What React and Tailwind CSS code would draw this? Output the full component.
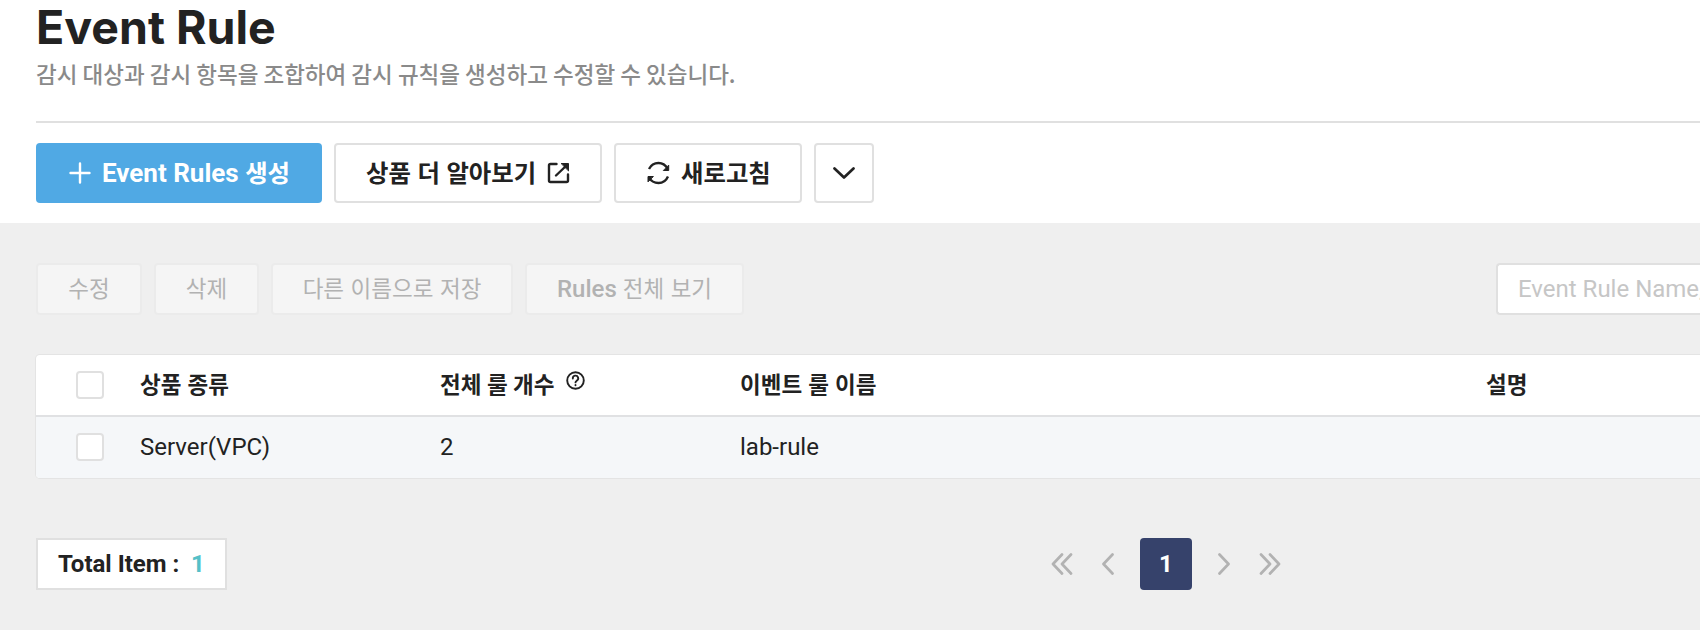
const KR = "font-['Noto_Sans_CJK_KR',sans-serif]";

function Ko({ children, className = '', size = 'text-[22.5px]', shift = '-top-0.5', space = '[word-spacing:1px]' }) {
  return <span className={`${KR} relative whitespace-pre ${shift} ${space} ${size} ${className}`}>{children}</span>;
}

function Checkbox() {
  return <span className="block size-7 rounded-[4px] border-2 border-[#e0e0e0] bg-white" />;
}

function Icon({ children, className, viewBox, width = 2.7 }) {
  return (
    <svg className={className} viewBox={viewBox} fill="none" stroke="currentColor" strokeWidth={width} strokeLinecap="round" strokeLinejoin="round">
      {children}
    </svg>
  );
}

const toolbar = [
  { ko: '수정', w: 'w-[106px]' },
  { ko: '삭제', w: 'w-[105px]' },
  { ko: '다른 이름으로 저장', w: 'w-[242px]' },
  { en: 'Rules ', ko: '전체 보기', w: 'w-[219px]' },
];

const columns = 'grid h-full grid-cols-[104px_300px_300px_746px_1fr] items-center';

export default function App() {
  return (
    <div className="h-[630px] w-full overflow-hidden bg-[#efefef] font-[Roboto,'Noto_Sans_CJK_KR',sans-serif] text-2xl leading-none text-[#222]">
      <header className="h-[223px] bg-white pl-9">
        <h1 className="h-14 font-[Inter,sans-serif] text-[46.5px] leading-[55px] font-bold whitespace-nowrap">Event Rule</h1>
        <p className="h-[65px] leading-9 font-medium text-[#8a8a8a]">
          <Ko shift="-top-px" space="[word-spacing:0.05px]">감시 대상과 감시 항목을 조합하여 감시 규칙을 생성하고 수정할 수 있습니다.</Ko>
        </p>
        <div className="h-0.5 bg-[#e0e0e0]" />
        <div className="mt-5 flex gap-3 text-[26px] font-bold">
          <button className="flex h-[60px] w-[286px] items-center rounded-[4px] bg-[#50a9e4] pl-[33px] text-white">
            <Icon className="mr-[11px] size-[22px]" viewBox="0 0 22 22" width={2.4}>
              <path d="M11 1.5v19M1.5 11h19" />
            </Icon>
            <span className="whitespace-pre">Event Rules </span>
            <Ko size="text-[24.4px]" shift="-top-px">생성</Ko>
          </button>
          <button className="flex h-[60px] w-[268px] items-center rounded-[4px] border-2 border-[#e0e0e0] pl-[30px]">
            <Ko size="text-[24.4px]" shift="-top-px" className="w-[181px] text-left">상품 더 알아보기</Ko>
            <Icon className="h-[22px] w-[23px]" viewBox="0 0 23 22" width={2.4}>
              <path d="M9.500 2H3.500Q2 2 2 3.500v15Q2 20 3.500 20h16q1.500 0 1.500-1.500V12.500M9 13.500 20 3" />
              <path d="M14.500 1.500h7v7z" fill="currentColor" strokeWidth="1" />
            </Icon>
          </button>
          <button className="flex h-[60px] w-[188px] items-center rounded-[4px] border-2 border-[#e0e0e0] pl-[30px]">
            <Icon className="mr-[11px] size-6" viewBox="0 0 24 24" width={2.4}>
              <path d="M3 8C5 4 8.500 2 12.500 2c4 0 7 2 9 5.500M22 15.500C20 20 16.500 22 12.500 22c-4 0-7.500-2-9.500-5.500" strokeLinecap="butt" />
              <path d="M22.700 4.500v5h-5zM2 20.500v-5h5z" fill="currentColor" strokeWidth="1" />
            </Icon>
            <Ko size="text-[24.4px]" shift="-top-px">새로고침</Ko>
          </button>
          <button className="flex size-[60px] items-center justify-center rounded-[4px] border-2 border-[#e0e0e0]">
            <Icon className="h-3 w-[22px]" viewBox="0 0 22 12">
              <path d="m1.500 1.500 9.500 9 9.500-9" />
            </Icon>
          </button>
        </div>
      </header>

      <main className="pl-9">
        <div className="flex justify-between pt-10">
          <div className="flex gap-3 font-medium text-[#b2b2b2]">
            {toolbar.map((b) => (
              <button key={b.ko} className={`flex h-[52px] items-center justify-center rounded-[4px] border-2 border-[#ebebeb] bg-[#f5f5f5] ${b.w}`}>
                {b.en && <span className="whitespace-pre">{b.en}</span>}
                <Ko className="font-normal" space="[word-spacing:1.5px]">{b.ko}</Ko>
              </button>
            ))}
          </div>
          <div className="flex h-[52px] w-[204px] items-center overflow-hidden rounded-l-[4px] border-2 border-r-0 border-[#e0e0e0] bg-white pl-5 whitespace-nowrap text-[#c6c6c6]">
            Event Rule Name,
          </div>
        </div>

        <section className="mt-10 h-[123px] overflow-hidden rounded-l-[4px] bg-white shadow-[0_0_0_1px_#e4e4e4]">
          <div className="h-[62px] border-b-2 border-[#e0e1e3]">
            <div className={columns}>
              <div className="pl-10"><Checkbox /></div>
              <Ko className="font-bold">상품 종류</Ko>
              <div className="flex items-center">
                <Ko className="w-[126px] font-bold" space="[word-spacing:0.4px]">전체 룰 개수</Ko>
                <Icon className="mb-2.5 size-[19px]" viewBox="0 0 19 19" width={1.9}>
                  <circle cx="9.500" cy="9.500" r="8.300" />
                  <path d="M6.800 7.500a2.700 2.700 0 1 1 4 2.200c-.9.600-1.300 1-1.300 1.700M9.500 14v.2" />
                </Icon>
              </div>
              <Ko className="font-bold">이벤트 룰 이름</Ko>
              <Ko className="font-bold">설명</Ko>
            </div>
          </div>
          <div className="h-[61px] bg-[#f5f7f9]">
            <div className={`${columns} pb-px`}>
              <div className="pl-10"><Checkbox /></div>
              <span>Server(VPC)</span>
              <span>2</span>
              <span>lab-rule</span>
            </div>
          </div>
        </section>

        <footer className="flex items-center pt-[60px]">
          <div className="flex h-[52px] w-[191px] items-center border-2 border-[#e0e0e0] bg-white pl-5 font-bold">
            <span className="w-[133px]">Total Item :</span>
            <span className="text-[#55c0c8]">1</span>
          </div>
          <nav className="ml-[824px] flex items-center text-[#b2b2b2]">
            <Icon className="mr-[29px] h-[22px] w-[22px]" viewBox="0 0 22 22">
              <path d="M11 1.500 2 11l9 9.500M20 1.500 11 11l9 9.500" />
            </Icon>
            <Icon className="h-[22px] w-3" viewBox="0 0 12 22">
              <path d="M10.500 1.500 1.500 11l9 9.500" />
            </Icon>
            <span className="mx-[26px] flex size-[52px] items-center justify-center rounded-[4px] bg-[#36426b] font-bold text-white">1</span>
            <Icon className="h-[22px] w-3" viewBox="0 0 12 22">
              <path d="m1.500 1.500 9 9.500-9 9.500" />
            </Icon>
            <Icon className="ml-[29px] h-[22px] w-[22px]" viewBox="0 0 22 22">
              <path d="m2 1.500 9 9.500-9 9.500M11 1.500l9 9.500-9 9.500" />
            </Icon>
          </nav>
        </footer>
      </main>
    </div>
  );
}
